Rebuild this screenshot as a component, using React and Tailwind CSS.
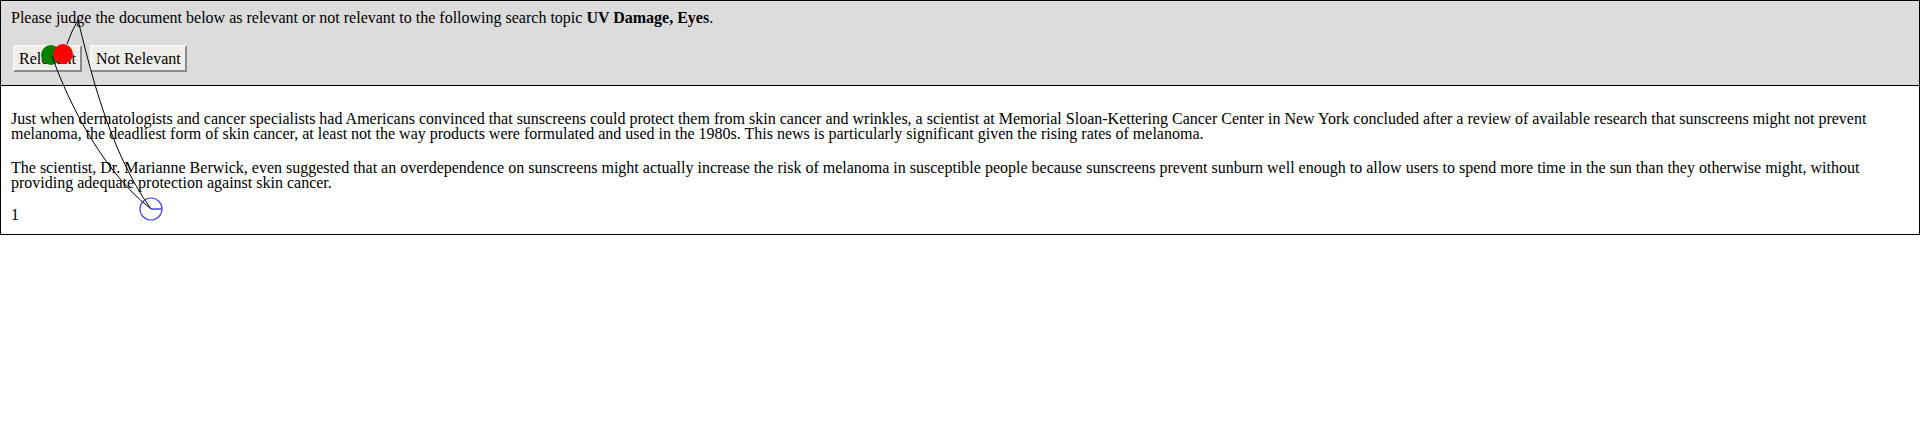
/**
 * Relevance judgement page with a gaze trail drawn over it
 */

const TOPIC = 'UV Damage, Eyes';

const PARAGRAPHS = [
  'Just when dermatologists and cancer specialists had Americans convinced that sunscreens could protect them from skin cancer and wrinkles, a scientist at Memorial Sloan-Kettering Cancer Center in New York concluded after a review of available research that sunscreens might not prevent melanoma, the deadliest form of skin cancer, at least not the way products were formulated and used in the 1980s. This news is particularly significant given the rising rates of melanoma.',
  'The scientist, Dr. Marianne Berwick, even suggested that an overdependence on sunscreens might actually increase the risk of melanoma in susceptible people because sunscreens prevent sunburn well enough to allow users to spend more time in the sun than they otherwise might, without providing adequate protection against skin cancer.',
];

function JudgeButton({ label }) {
  return (
    <button className="h-[27px] px-[4px] bg-[#efedea] border-2 border-t-[#f7f7f7] border-l-[#f7f7f7] border-r-[#8a8a8a] border-b-[#8a8a8a] leading-none text-black">
      {label}
    </button>
  );
}

function GazeTrail() {
  return (
    <svg
      className="absolute left-0 top-0 pointer-events-none"
      width="200"
      height="240"
      viewBox="0 0 200 240"
    >
      <circle cx="51" cy="55" r="10" fill="#008000" />
      <circle cx="63" cy="54" r="10" fill="#ff0000" />
      <path d="M78 20 Q72 30 67 44" fill="none" stroke="#000" strokeWidth="1" />
      <path d="M78 20 C88 60 108 150 151 209" fill="none" stroke="#000" strokeWidth="1" />
      <path d="M52 56 C62 85 95 165 151 209" fill="none" stroke="#000" strokeWidth="1" />
      <circle cx="151" cy="209" r="11" fill="none" stroke="#4646dc" strokeWidth="1.2" />
      <line x1="151" y1="209" x2="162" y2="209" stroke="#4646dc" strokeWidth="1.5" />
    </svg>
  );
}

export default function App() {
  return (
    <div className="relative bg-white text-black text-[16px] font-['Liberation_Serif','Times_New_Roman',serif]">
      {/* Instructions and buttons */}
      <div className="border border-black bg-[#dcdcdc] pl-[10px] pt-2 pb-[13px]">
        <p className="leading-[18px]">
          Please judge the document below as relevant or not relevant to the following search topic{' '}
          <b>{TOPIC}</b>.
        </p>
        <div className="flex gap-2 mt-[18px] ml-[2px]">
          <JudgeButton label="Relevant" />
          <JudgeButton label="Not Relevant" />
        </div>
      </div>

      {/* Document */}
      <div className="border-x border-b border-black pl-[10px] pr-[10px] pt-[25px] pb-[12px] leading-[15px]">
        <p className="mb-[19px]">{PARAGRAPHS[0]}</p>
        <p className="mb-[17px]">{PARAGRAPHS[1]}</p>
        <div>1</div>
      </div>

      <GazeTrail />
    </div>
  );
}
